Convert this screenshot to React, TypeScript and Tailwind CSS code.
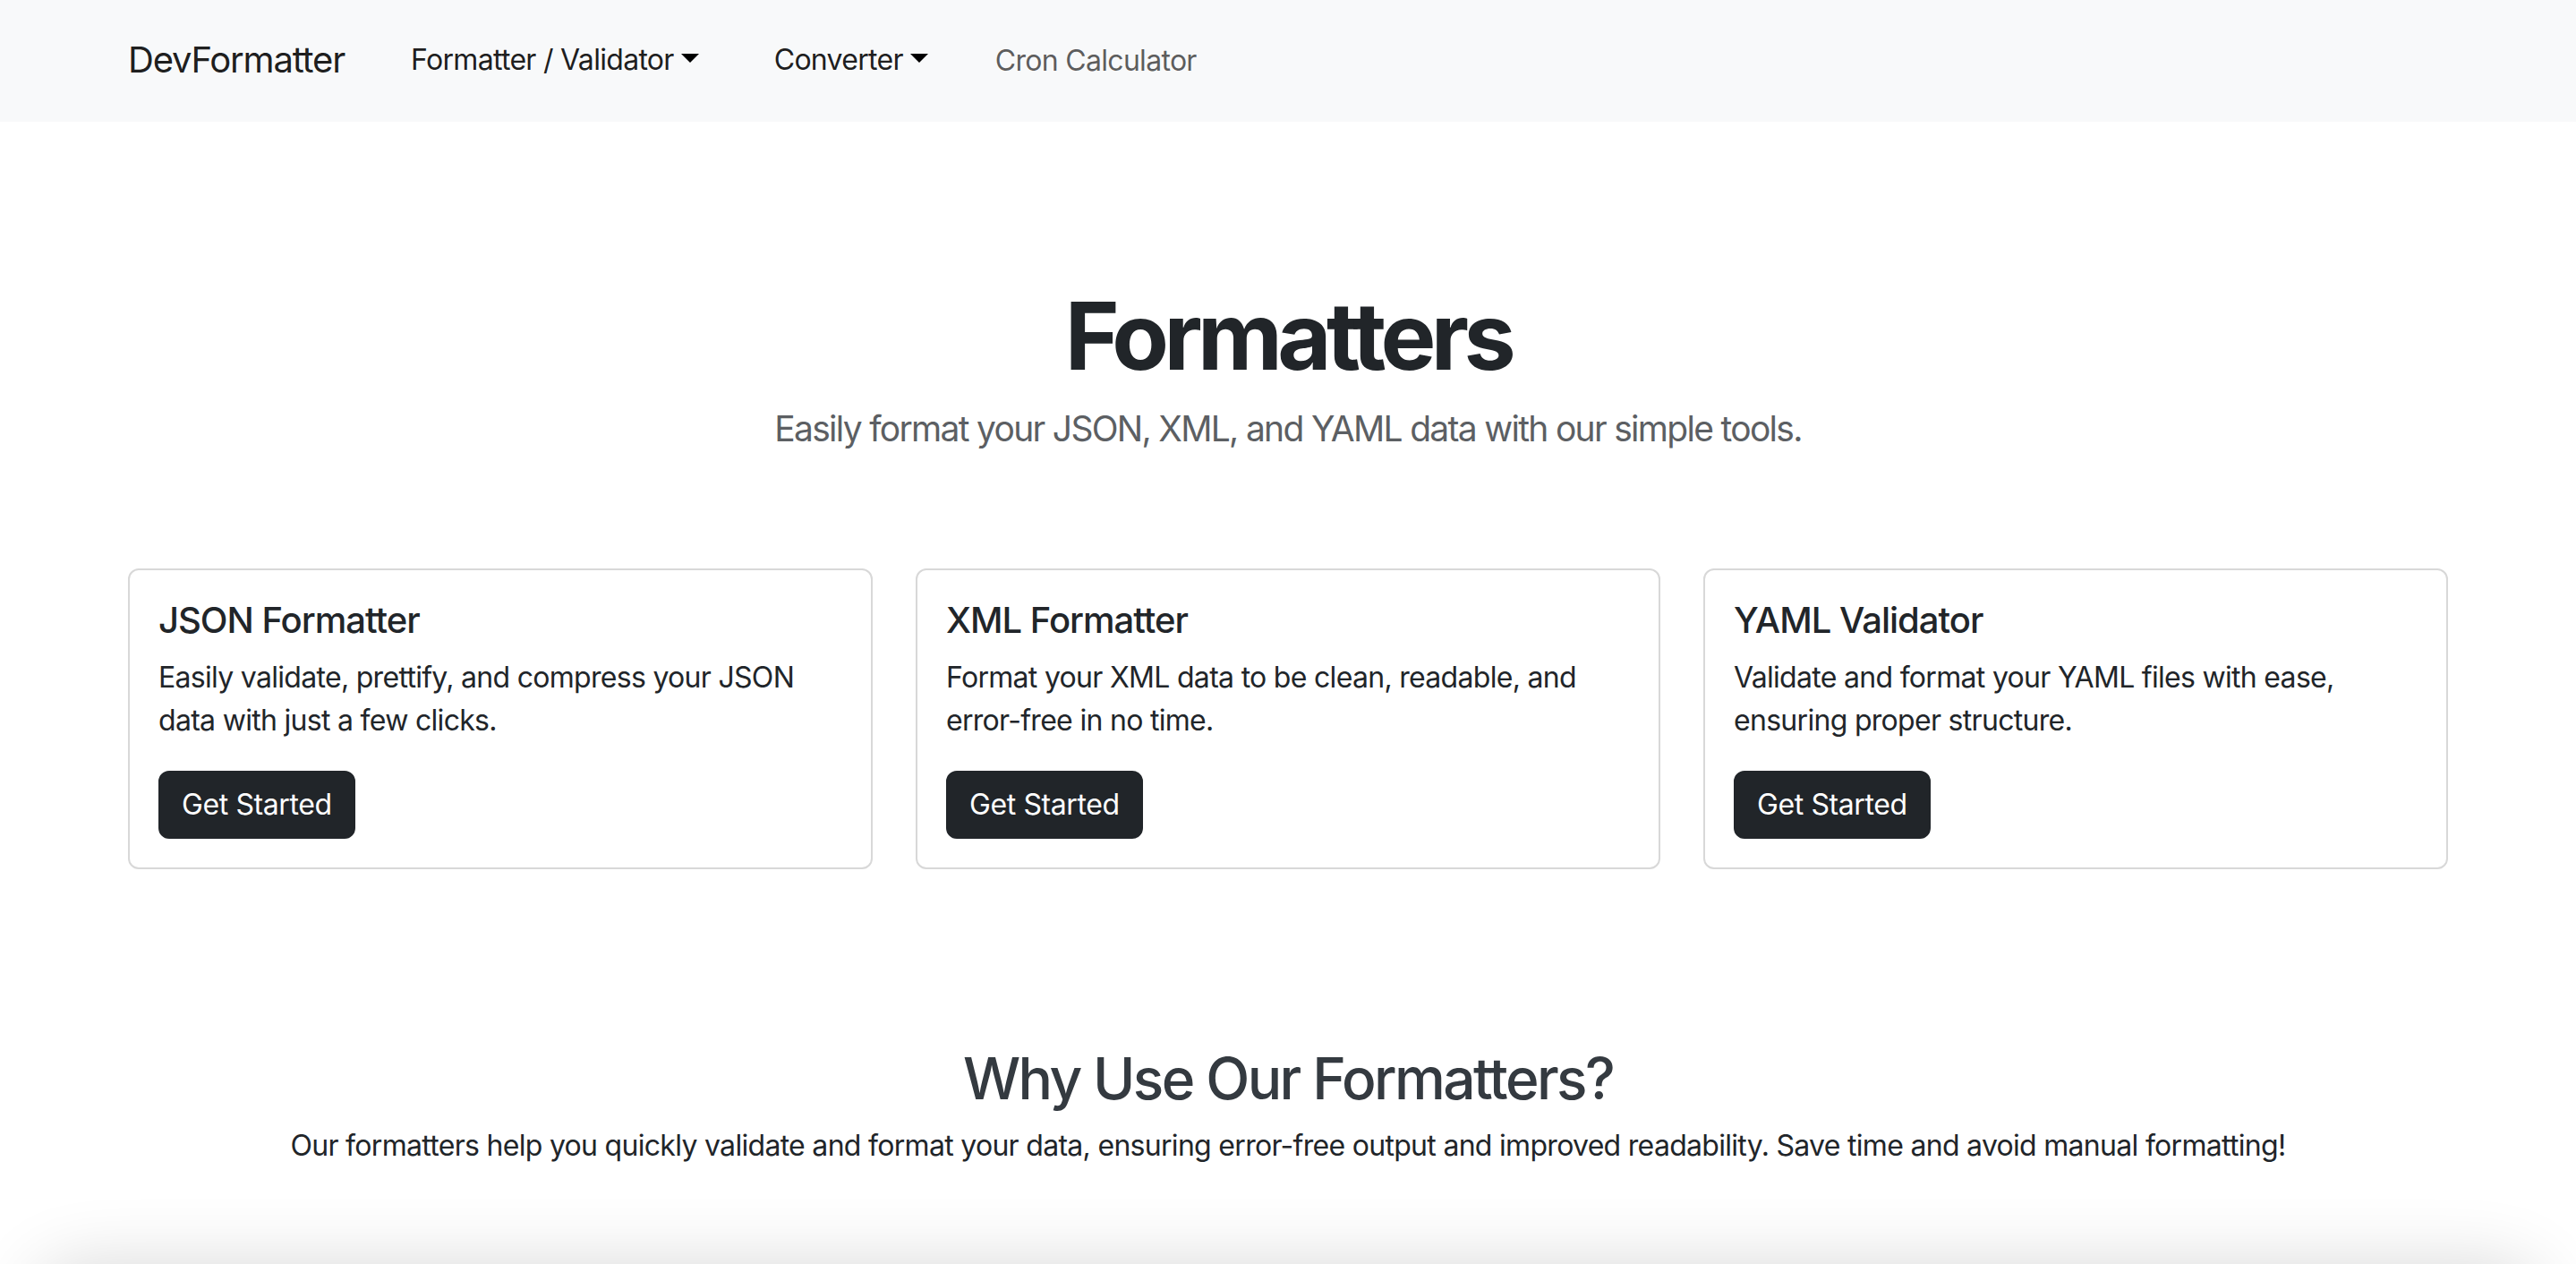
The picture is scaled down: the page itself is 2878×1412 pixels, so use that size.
const FONT = 'font-["Inter","Noto_Sans",sans-serif]'

const tools = [
  {
    title: 'JSON Formatter',
    text: 'Easily validate, prettify, and compress your JSON data with just a few clicks.',
  },
  {
    title: 'XML Formatter',
    text: 'Format your XML data to be clean, readable, and error-free in no time.',
  },
  {
    title: 'YAML Validator',
    text: 'Validate and format your YAML files with ease, ensuring proper structure.',
  },
]

/** Треугольник у выпадающих пунктов меню */
const Caret = () => (
  <span className="ml-[8px] inline-block border-x-[10px] border-t-[10px] border-b-0 border-x-transparent border-t-black align-[8px]" />
)

const ToolCard = ({ title, text }: { title: string; text: string }) => (
  <div className="rounded-[12px] border-2 border-[#d8d8d8] bg-white p-[32px]">
    <h5 className="mb-[16px] text-[40px] font-medium leading-[48px] tracking-[-1px] text-[#212529]">
      {title}
    </h5>
    <p className="mb-[32px] text-[32px] leading-[48px] tracking-[-0.7px] text-[#212529]">
      {text}
    </p>
    <button className="rounded-[12px] border-2 border-[#212529] bg-[#212529] px-[24px] py-[12px] text-[32px] leading-[48px] tracking-[-0.4px] text-white">
      Get Started
    </button>
  </div>
)

export default function App() {
  return (
    <div className={`${FONT} min-h-screen overflow-hidden bg-white`}>
      {/* Навбар */}
      <nav className="h-[136px] bg-[#f8f9fa]">
        <div className="mx-auto flex h-full max-w-[2640px] items-center px-[24px]">
          <span className="-mt-[2px] text-[40px] leading-[60px] tracking-[-1.2px] text-black/90">
            DevFormatter
          </span>
          <div className="-mt-[2px] ml-[74px] flex items-center text-[32px] leading-[48px] tracking-[-0.7px]">
            <span className="text-black/90">
              Formatter / Validator
              <Caret />
            </span>
            <span className="ml-[84px] text-black/90">
              Converter
              <Caret />
            </span>
            <span className="ml-[75px] mt-[2px] text-black/65">Cron Calculator</span>
          </div>
        </div>
      </nav>

      {/* Герой */}
      <header className="pt-[172px] text-center">
        <h1 className="text-[104px] font-bold leading-[134px] tracking-[-5.6px] text-[#212529]">
          Formatters
        </h1>
        <p className="mt-[7px] text-[39px] leading-[60px] tracking-[-1.7px] text-[#5c5f63]">
          Easily format your JSON, XML, and YAML data with our simple tools.
        </p>
      </header>

      {/* Карточки */}
      <section className="mx-auto mt-[126px] max-w-[2640px] px-[24px]">
        <div className="grid grid-cols-3 gap-[48px]">
          {tools.map((t) => (
            <ToolCard key={t.title} title={t.title} text={t.text} />
          ))}
        </div>
      </section>

      {/* Почему мы */}
      <section className="mt-[195px] text-center">
        <h2 className="text-[64px] font-medium leading-[77px] tracking-[-2.6px] text-[#343a40]">
          Why Use Our Formatters?
        </h2>
        <p className="mt-[13px] text-[32px] leading-[48px] tracking-[-0.7px] text-[#212529]">
          Our formatters help you quickly validate and format your data, ensuring
          error-free output and improved readability. Save time and avoid manual
          formatting!
        </p>
      </section>

      <div className="mx-[40px] mt-[110px] h-[300px] rounded-[48px] bg-white shadow-[0_0_80px_rgba(0,0,0,0.16)]" />
    </div>
  )
}
